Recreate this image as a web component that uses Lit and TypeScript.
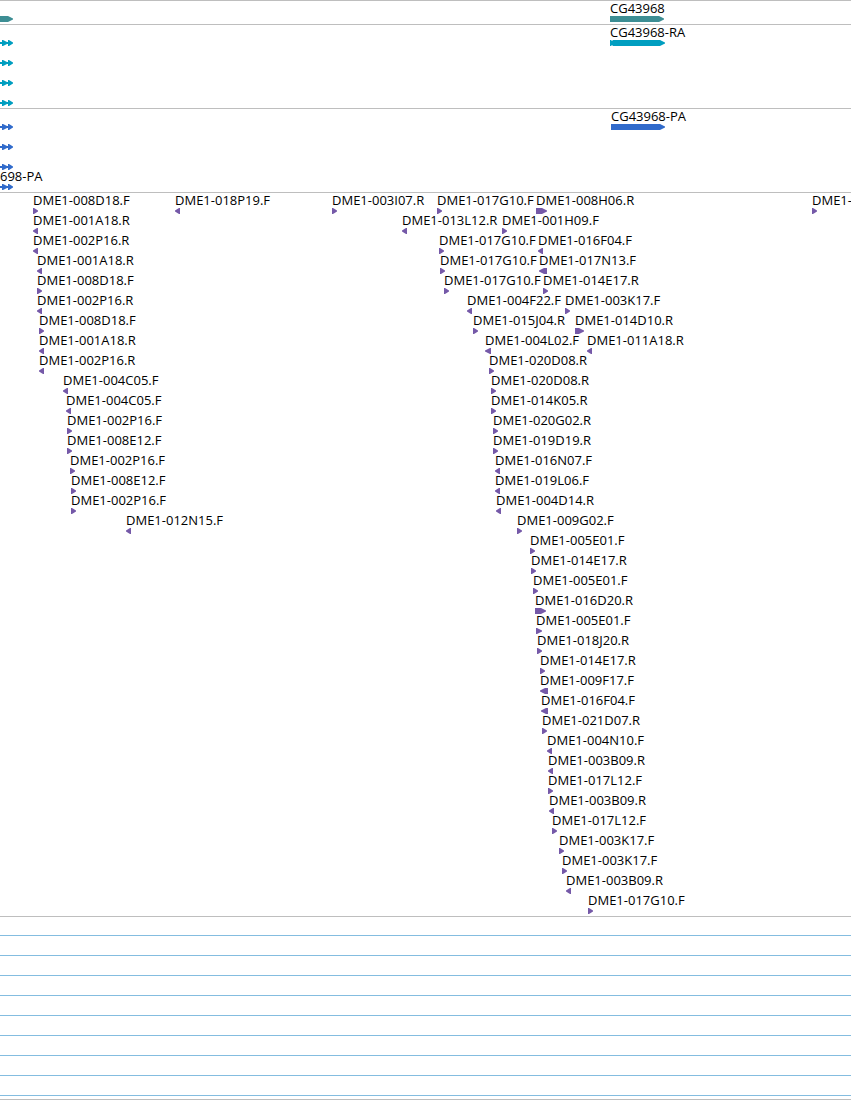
import { LitElement, html, svg, css } from "lit";
import { customElement, property } from "lit/decorators.js";

type Shape = "right" | "left" | "gene" | "transcript" | "protein" | "exons";

interface Feature {
  x: number;
  label?: string;
  shape: Shape;
  width: number;
}

const clone = (x: number, name: string, shape: Shape = "right", width = 5): Feature => ({
  x,
  label: "DME1-" + name,
  shape,
  width,
});

const exons: Feature = { x: 0, shape: "exons", width: 14 };

const genes: Feature[][] = [
  [
    { x: 0, shape: "gene", width: 13 },
    { x: 610, label: "CG43968", shape: "gene", width: 54 },
  ],
];

const transcripts: Feature[][] = [
  [exons, { x: 610, label: "CG43968-RA", shape: "transcript", width: 55 }],
  [exons],
  [exons],
  [exons],
];

const proteins: Feature[][] = [
  [exons, { x: 611, label: "CG43968-PA", shape: "protein", width: 54 }],
  [exons],
  [exons],
  [{ x: 0, label: "698-PA", shape: "exons", width: 14 }],
];

const clones: Feature[][] = [
  [
    clone(33, "008D18.F"),
    clone(175, "018P19.F", "left"),
    clone(332, "003I07.R"),
    clone(437, "017G10.F"),
    clone(536, "008H06.R", "right", 11),
    clone(812, ""),
  ],
  [clone(33, "001A18.R", "left"), clone(402, "013L12.R", "left"), clone(502, "001H09.F")],
  [clone(33, "002P16.R", "left"), clone(439, "017G10.F"), clone(538, "016F04.F", "left")],
  [clone(37, "001A18.R", "left"), clone(440, "017G10.F"), clone(539, "017N13.F", "left", 8)],
  [clone(37, "008D18.F"), clone(444, "017G10.F"), clone(543, "014E17.R")],
  [clone(37, "002P16.R", "left"), clone(467, "004F22.F", "left"), clone(565, "003K17.F")],
  [clone(39, "008D18.F"), clone(473, "015J04.R"), clone(575, "014D10.R", "right", 9)],
  [clone(39, "001A18.R", "left"), clone(485, "004L02.F", "left", 6), clone(587, "011A18.R", "left")],
  [clone(39, "002P16.R", "left"), clone(489, "020D08.R")],
  [clone(63, "004C05.F", "left"), clone(491, "020D08.R")],
  [clone(66, "004C05.F", "left"), clone(491, "014K05.R")],
  [clone(67, "002P16.F"), clone(493, "020G02.R")],
  [clone(67, "008E12.F"), clone(493, "019D19.R")],
  [clone(70, "002P16.F"), clone(495, "016N07.F", "left")],
  [clone(71, "008E12.F"), clone(495, "019L06.F", "left")],
  [clone(71, "002P16.F"), clone(496, "004D14.R", "left")],
  [clone(126, "012N15.F", "left"), clone(517, "009G02.F")],
  [clone(530, "005E01.F")],
  [clone(531, "014E17.R")],
  [clone(533, "005E01.F")],
  [clone(535, "016D20.R", "right", 11)],
  [clone(536, "005E01.F", "right", 6)],
  [clone(537, "018J20.R")],
  [clone(540, "014E17.R")],
  [clone(540, "009F17.F", "left", 8)],
  [clone(541, "016F04.F", "left", 7)],
  [clone(542, "021D07.R")],
  [clone(547, "004N10.F", "left")],
  [clone(548, "003B09.R", "left")],
  [clone(548, "017L12.F")],
  [clone(549, "003B09.R", "left")],
  [clone(552, "017L12.F")],
  [clone(559, "003K17.F")],
  [clone(562, "003K17.F")],
  [clone(566, "003B09.R", "left")],
  [clone(588, "017G10.F")],
];

function outline(shape: Shape, w: number) {
  const neck = Math.max(1, w - 5);
  switch (shape) {
    case "right":
      return svg`<path d="M0 0H${neck}L${w} 2.5V3.5L${neck} 6H0Z"/>`;
    case "left":
      return svg`<path d="M${w} 0H${w - neck}L0 2.5V3.5L${w - neck} 6H${w}Z"/>`;
    case "transcript":
      return svg`<path d="M0 0H1L2 1L3 0H${w - 5}L${w} 2.5V3.5L${w - 5} 6H3L2 5L1 6H0Z"/>`;
    case "exons":
      return svg`<path d="M0 2H2V0H3L7 2H8V0H9L13 2.5V3.5L9 6H8V4H7L3 6H2V4H0Z"/>`;
    default:
      return svg`<path d="M0 0H${w - 5}L${w} 2.5V3.5L${w - 5} 6H0Z"/>`;
  }
}

@customElement("feature-track")
export class FeatureTrack extends LitElement {
  @property({ attribute: false }) rows: Feature[][] = [];

  static styles = css`
    :host {
      display: block;
      border-top: 1px solid #bebebe;
      padding-bottom: 3px;
    }
    .row {
      position: relative;
      height: 20px;
    }
    .feature {
      position: absolute;
      top: 0;
      display: flex;
      flex-direction: column;
      white-space: nowrap;
    }
    .label {
      height: 15px;
      line-height: 15px;
    }
    .mark {
      display: block;
      height: 6px;
      fill: var(--mark);
      overflow: visible;
    }
  `;

  render() {
    return this.rows.map(
      (row) => html`<div class="row">
        ${row.map(
          (f) => html`<div class="feature" style="left:${f.x}px">
            <span class="label">${f.label ?? ""}</span>
            <svg class="mark" width=${f.width} height="6" aria-hidden="true">${outline(f.shape, f.width)}</svg>
          </div>`
        )}
      </div>`
    );
  }
}

@customElement("app-root")
export class AppRoot extends LitElement {
  static styles = css`
    :host {
      display: block;
      overflow: hidden;
      background: #fff;
      color: #000;
      font: 13px "Open Sans", "Noto Sans", sans-serif;
    }
    .genes {
      --mark: #3d8e94;
    }
    .transcripts {
      --mark: #009ec0;
    }
    .proteins {
      --mark: #316bcb;
    }
    .clones {
      --mark: #7559a8;
    }
    .empty {
      padding-bottom: 3px;
      border-bottom: 1px solid #bebebe;
    }
    .lane {
      box-sizing: border-box;
      height: 20px;
      border-bottom: 1px solid #84bde0;
    }
    .lane:first-child {
      border-top: 1px solid #bebebe;
    }
  `;

  render() {
    return html`
      <main>
        <feature-track class="genes" .rows=${genes}></feature-track>
        <feature-track class="transcripts" .rows=${transcripts}></feature-track>
        <feature-track class="proteins" .rows=${proteins}></feature-track>
        <feature-track class="clones" .rows=${clones}></feature-track>
        <div class="empty">${Array.from({ length: 9 }, () => html`<div class="lane"></div>`)}</div>
      </main>
    `;
  }
}
